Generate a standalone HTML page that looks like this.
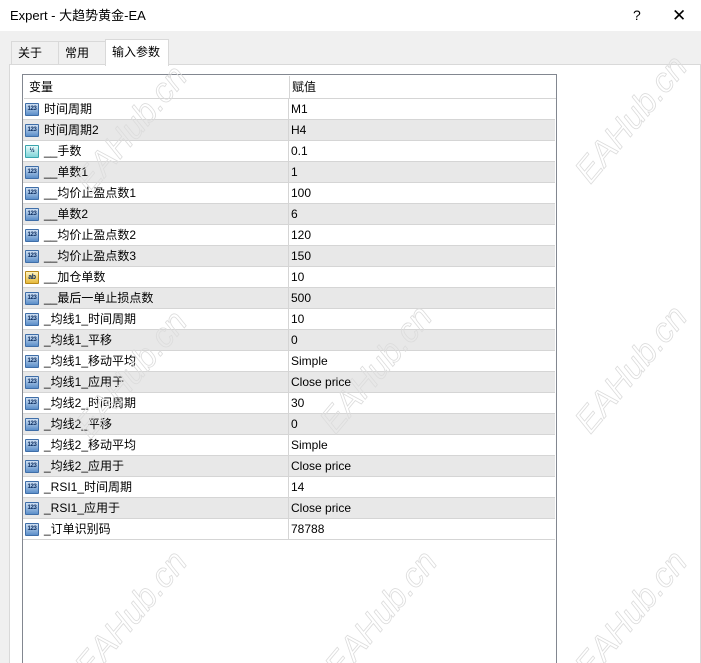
<!DOCTYPE html>
<html><head><meta charset="utf-8"><style>
*{margin:0;padding:0;box-sizing:border-box}
html,body{width:701px;height:663px;overflow:hidden}
body{background:#f0f0f0;font-family:"Liberation Sans","Noto Sans CJK SC",sans-serif;font-size:12px;color:#000;position:relative}
.title{position:absolute;left:0;top:0;width:701px;height:31px;background:#fff;font-size:13px}
.title span{position:absolute;left:10px;top:0;line-height:31px}
.title .q{left:633px;font-size:14px}
.title .x{left:672px;font-size:17px}
.tab{position:absolute;top:41px;height:24px;border:1px solid #d9d9d9;border-bottom:none;background:#f0f0f0;line-height:22px;padding-left:6px}
.panel{position:absolute;left:9px;top:64px;width:692px;height:610px;background:#fff;border:1px solid #d9d9d9}
.tbl{position:absolute;left:22px;top:74px;width:535px;height:600px;border:1px solid #828790;background:#fff}
.row{position:absolute;left:1px;width:532px;height:21px;border-bottom:1px solid #d5d5d5;line-height:20px}
.row.g{background:#e8e8e8}
.row .n{position:absolute;left:21px;top:0}
.row .v{position:absolute;left:268px;top:0}
.row .sep{position:absolute;left:265px;top:0;width:1px;height:21px;background:#d5d5d5}
.ic{position:absolute;left:2px;top:4px;width:14px;height:13px;background:linear-gradient(#cfe0f3,#5b8ec9);border:1px solid #3f6ea8;border-radius:1px;font-size:6px;color:#0a2a5c;font-weight:bold;font-style:normal;line-height:11px;text-align:center;letter-spacing:-0.3px}
.ic.h{background:linear-gradient(#e8fbfb,#7fd4d8);border-color:#3aa5ad}
.ic.a{background:linear-gradient(#fff4c0,#e6b93a);border-color:#b8891a;font-size:7px}
.wm{position:absolute;font-size:34px;font-style:italic;color:transparent;-webkit-text-stroke:0.8px #dcdcdc;transform:rotate(-50deg);white-space:nowrap;font-family:"Liberation Sans",sans-serif}
</style></head><body>
<div class="title"><span>Expert - 大趋势黄金-EA</span><span class="q">?</span><span class="x">✕</span></div>
<div class="tab" style="left:11px;width:48px">关于</div>
<div class="tab" style="left:58px;width:48px">常用</div>
<div class="panel"></div>
<div class="tab" style="left:105px;top:39px;height:27px;width:64px;background:#fff;line-height:25px">输入参数</div>
<div class="tbl">
<div class="row" style="top:1px;height:23px;line-height:22px"><span class="n" style="left:5px">变量</span><span class="v">赋值</span><span class="sep" style="height:22px"></span></div>
</div>
<div style="position:absolute;left:22px;top:99px">
<div class="row" style="top:0"><i class="ic">123</i><span class="n">时间周期</span><span class="sep"></span><span class="v">M1</span></div>
<div class="row g" style="top:21px"><i class="ic">123</i><span class="n">时间周期2</span><span class="sep"></span><span class="v">H4</span></div>
<div class="row" style="top:42px"><i class="ic h">½</i><span class="n">__手数</span><span class="sep"></span><span class="v">0.1</span></div>
<div class="row g" style="top:63px"><i class="ic">123</i><span class="n">__单数1</span><span class="sep"></span><span class="v">1</span></div>
<div class="row" style="top:84px"><i class="ic">123</i><span class="n">__均价止盈点数1</span><span class="sep"></span><span class="v">100</span></div>
<div class="row g" style="top:105px"><i class="ic">123</i><span class="n">__单数2</span><span class="sep"></span><span class="v">6</span></div>
<div class="row" style="top:126px"><i class="ic">123</i><span class="n">__均价止盈点数2</span><span class="sep"></span><span class="v">120</span></div>
<div class="row g" style="top:147px"><i class="ic">123</i><span class="n">__均价止盈点数3</span><span class="sep"></span><span class="v">150</span></div>
<div class="row" style="top:168px"><i class="ic a">ab</i><span class="n">__加仓单数</span><span class="sep"></span><span class="v">10</span></div>
<div class="row g" style="top:189px"><i class="ic">123</i><span class="n">__最后一单止损点数</span><span class="sep"></span><span class="v">500</span></div>
<div class="row" style="top:210px"><i class="ic">123</i><span class="n">_均线1_时间周期</span><span class="sep"></span><span class="v">10</span></div>
<div class="row g" style="top:231px"><i class="ic">123</i><span class="n">_均线1_平移</span><span class="sep"></span><span class="v">0</span></div>
<div class="row" style="top:252px"><i class="ic">123</i><span class="n">_均线1_移动平均</span><span class="sep"></span><span class="v">Simple</span></div>
<div class="row g" style="top:273px"><i class="ic">123</i><span class="n">_均线1_应用于</span><span class="sep"></span><span class="v">Close price</span></div>
<div class="row" style="top:294px"><i class="ic">123</i><span class="n">_均线2_时间周期</span><span class="sep"></span><span class="v">30</span></div>
<div class="row g" style="top:315px"><i class="ic">123</i><span class="n">_均线2_平移</span><span class="sep"></span><span class="v">0</span></div>
<div class="row" style="top:336px"><i class="ic">123</i><span class="n">_均线2_移动平均</span><span class="sep"></span><span class="v">Simple</span></div>
<div class="row g" style="top:357px"><i class="ic">123</i><span class="n">_均线2_应用于</span><span class="sep"></span><span class="v">Close price</span></div>
<div class="row" style="top:378px"><i class="ic">123</i><span class="n">_RSI1_时间周期</span><span class="sep"></span><span class="v">14</span></div>
<div class="row g" style="top:399px"><i class="ic">123</i><span class="n">_RSI1_应用于</span><span class="sep"></span><span class="v">Close price</span></div>
<div class="row" style="top:420px"><i class="ic">123</i><span class="n">_订单识别码</span><span class="sep"></span><span class="v">78788</span></div>
</div>
<div class="wm" style="left:55px;top:110px">EAHub.cn</div>
<div class="wm" style="left:555px;top:100px">EAHub.cn</div>
<div class="wm" style="left:55px;top:355px">EAHub.cn</div>
<div class="wm" style="left:300px;top:350px">EAHub.cn</div>
<div class="wm" style="left:555px;top:350px">EAHub.cn</div>
<div class="wm" style="left:55px;top:595px">EAHub.cn</div>
<div class="wm" style="left:305px;top:595px">EAHub.cn</div>
<div class="wm" style="left:555px;top:595px">EAHub.cn</div>
</body></html>
